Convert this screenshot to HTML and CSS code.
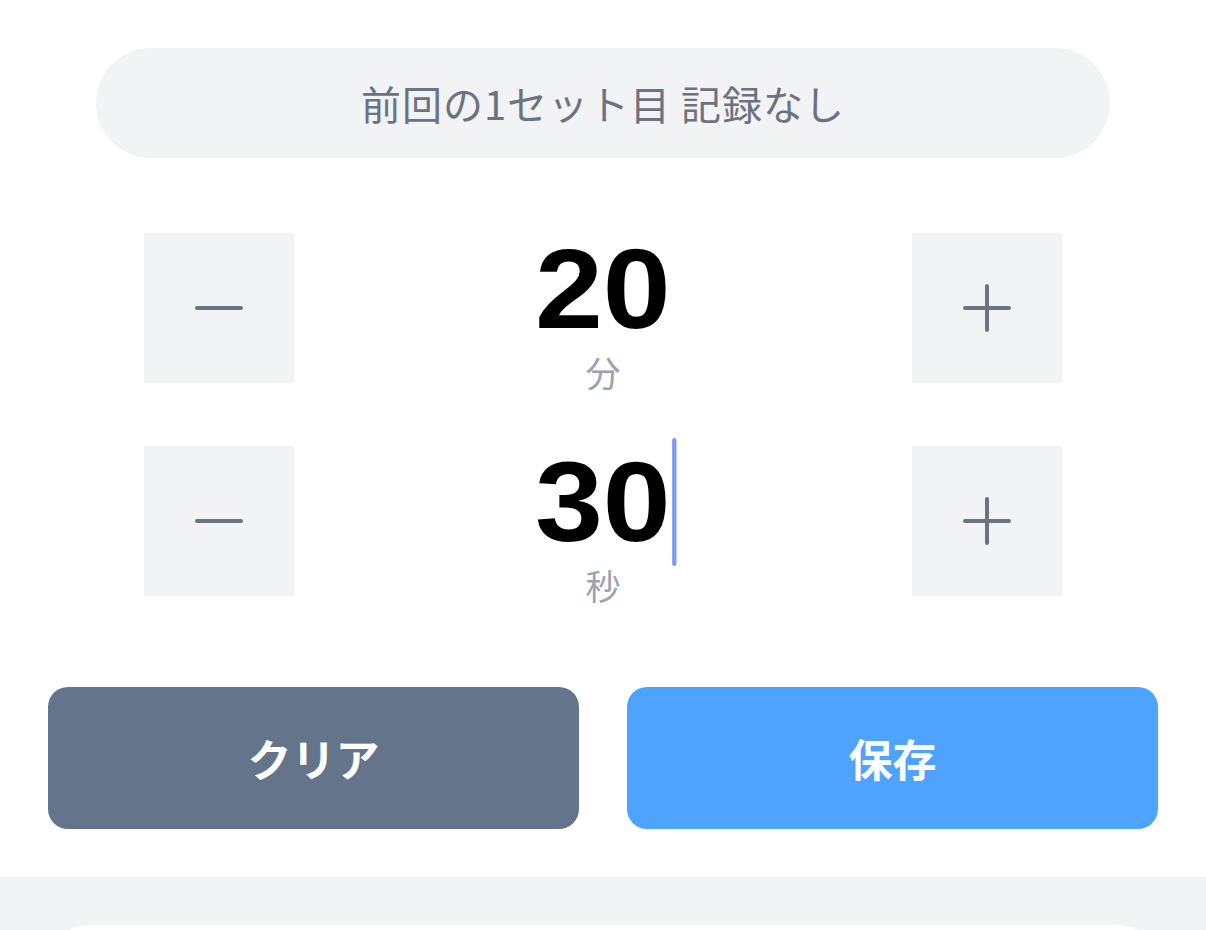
FILE: index.html
```html
<!DOCTYPE html>
<html lang="ja">
<head>
<meta charset="utf-8">
<title>Timer</title>
<link rel="stylesheet" href="styles.css">
</head>
<body>
<div class="panel">
  <div class="prev-pill">前回の1セット目 記録なし</div>

  <div class="steppers">
    <div class="stepper-row">
      <button class="step-btn" aria-label="減らす">
        <svg viewBox="0 0 48 48" width="48" height="48"><path d="M2 24H46" /></svg>
      </button>
      <div class="value-col">
        <div class="value"><span class="value-text">20</span></div>
        <div class="unit">分</div>
      </div>
      <button class="step-btn" aria-label="増やす">
        <svg viewBox="0 0 48 48" width="48" height="48"><path d="M2 24H46M24 2V46" /></svg>
      </button>
    </div>

    <div class="stepper-row">
      <button class="step-btn" aria-label="減らす">
        <svg viewBox="0 0 48 48" width="48" height="48"><path d="M2 24H46" /></svg>
      </button>
      <div class="value-col">
        <div class="value"><span class="value-text focused">30<span class="caret"></span></span></div>
        <div class="unit">秒</div>
      </div>
      <button class="step-btn" aria-label="増やす">
        <svg viewBox="0 0 48 48" width="48" height="48"><path d="M2 24H46M24 2V46" /></svg>
      </button>
    </div>
  </div>

  <div class="actions">
    <button class="action clear">クリア</button>
    <button class="action save">保存</button>
  </div>
</div>

<div class="lower">
  <div class="card"></div>
</div>
</body>
</html>
```

FILE: styles.css
```css
* { box-sizing: border-box; }

html, body {
  margin: 0;
  padding: 0;
  background: #ffffff;
  font-family: "Noto Sans CJK JP", "Noto Sans", sans-serif;
}

.panel {
  padding: 48px 48px 48px;
}

.prev-pill {
  margin: 0 48px;
  height: 110px;
  border-radius: 55px;
  background: #f2f3f5;
  color: #6b7280;
  font-size: 40px;
  letter-spacing: 1px;
  display: flex;
  align-items: center;
  justify-content: center;
}

.steppers {
  margin-top: 67px;
  padding: 0 96px;
  display: flex;
  flex-direction: column;
  gap: 47px;
}

.stepper-row {
  display: flex;
  align-items: center;
  justify-content: space-between;
}

.step-btn {
  width: 150px;
  height: 150px;
  border: none;
  margin: 0;
  padding: 0;
  background: #f2f3f5;
  display: flex;
  align-items: center;
  justify-content: center;
}

.step-btn svg {
  display: block;
}

.step-btn path {
  stroke: #6b7280;
  stroke-width: 4;
  stroke-linecap: round;
  fill: none;
}

.value-col {
  display: flex;
  flex-direction: column;
  align-items: center;
}

.value {
  height: 128px;
  line-height: 128px;
  font-family: "Liberation Sans", Arial, sans-serif;
  font-weight: 700;
  font-size: 113px;
  color: #000000;
}

.value-text {
  position: relative;
  display: inline-block;
  transform: scaleX(1.08);
}

.caret {
  position: absolute;
  top: 0;
  right: -5px;
  width: 4px;
  height: 128px;
  border-radius: 2px;
  background: #7a9af5;
}

.unit {
  height: 38px;
  line-height: 38px;
  font-size: 35px;
  color: #9ca3af;
}

.actions {
  margin-top: 83px;
  display: flex;
  gap: 48px;
}

.action {
  flex: 1;
  height: 142px;
  border: none;
  border-radius: 20px;
  color: #ffffff;
  font-family: "Noto Sans CJK JP", "Noto Sans", sans-serif;
  font-weight: 700;
  font-size: 44px;
  padding: 0;
}

.action.clear { background: #64748b; }
.action.save { background: #4ea3fe; }

.lower {
  background: #f2f3f5;
  padding: 48px 48px 0;
  min-height: 200px;
}

.card {
  background: #ffffff;
  height: 200px;
  border-radius: 40px 40px 0 0;
}
```
